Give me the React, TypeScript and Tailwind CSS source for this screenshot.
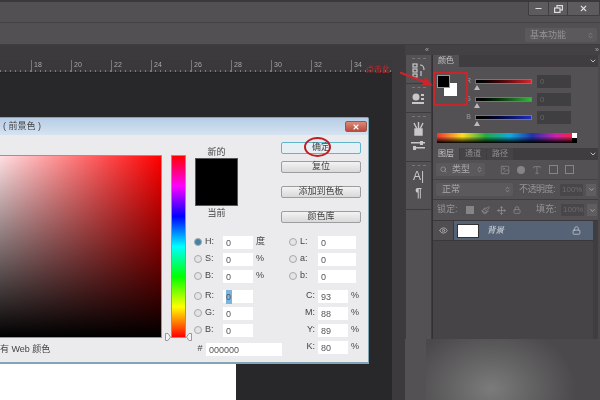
import React from 'react';
import { Minus, X, Eye, Lock, Search, Image, Type, Move, Paintbrush, ChevronsUpDown, ChevronDown } from 'lucide-react';

const font = "font-['Liberation_Sans','Noto_Sans_CJK_SC',sans-serif]";

const rulerMarks = [18, 20, 22, 24, 26, 28, 30, 32, 34];

function Ruler() {
  return (
    <div className="h-[13px] shrink-0 bg-[#3a383a] border-b border-[#232223] flex overflow-hidden bg-[repeating-linear-gradient(to_right,#7a7a7a_0,#7a7a7a_1px,transparent_1px,transparent_5px)] bg-[length:100%_2px] bg-bottom bg-no-repeat">
      <div className="w-[31px] shrink-0" />
      {rulerMarks.map((n) => (
        <div key={n} className="w-[40px] shrink-0 border-l border-[#777] pl-[2px] text-[7px] leading-[10px] text-[#a9a9a9]">
          {n}
        </div>
      ))}
    </div>
  );
}

function DialogButton({ label, active, className }: { label: string; active?: boolean; className?: string }) {
  return (
    <div
      className={`h-[12px] rounded-[2px] border flex items-center justify-center text-[9px] text-[#444] ${
        active ? 'border-[#62b4cb] bg-[#e6eff3]' : 'border-[#9d9d9f] bg-gradient-to-b from-[#f3f3f3] to-[#d9d9da]'
      } ${className ?? ''}`}
    >
      {label}
    </div>
  );
}

function Field({ label, value, unit, on, selected, width = 'w-[30px]' }: { label: string; value: string; unit?: string; on?: boolean; selected?: boolean; width?: string }) {
  return (
    <div className="flex items-center h-[14px] text-[9px] text-[#444]">
      <span className={`w-[8px] h-[8px] rounded-full border border-[#a9a9a9] mr-[3px] shrink-0 ${on ? 'bg-[#3d84a8]' : 'bg-[#e4e4e4]'}`} />
      <span className="w-[18px] shrink-0">{label}</span>
      <span className={`${width} h-[13px] bg-white pl-[3px] leading-[14px] text-[#555] shrink-0`}>
        <span className={selected ? 'inline-block w-[6px] bg-[#7cb4dc]' : ''}>{value}</span>
      </span>
      {unit && <span className="ml-[3px]">{unit}</span>}
    </div>
  );
}

function Cmyk({ label, value }: { label: string; value: string }) {
  return (
    <div className="flex items-center h-[14px] text-[9px] text-[#444]">
      <span className="w-[29px] pr-[3px] text-right shrink-0">{label}</span>
      <span className="w-[30px] h-[13px] bg-white pl-[3px] leading-[14px] text-[#555] shrink-0">{value}</span>
      <span className="ml-[3px]">%</span>
    </div>
  );
}

function HueThumb({ className }: { className: string }) {
  return (
    <svg className={`absolute bottom-[-4px] ${className}`} width="6" height="8" viewBox="0 0 6 8" fill="#f4f4f4" stroke="#999">
      <path d="M0.5 0.5h2.5l2.5 3.5-2.5 3.5h-2.5z" />
    </svg>
  );
}

function ColorDialog() {
  return (
    <div className="absolute left-[-60px] top-[117px] w-[429px] h-[247px] bg-[#ebebed] border border-[#7fa6b4] border-b-2 rounded-t-[2px] flex flex-col">
      <div className="h-[17px] shrink-0 bg-gradient-to-b from-[#b7cde5] to-[#d6e3f1] flex items-center justify-between pl-[62px] pr-[1px]">
        <span className="text-[9px] text-[#444]">( 前景色 )</span>
        <span className="w-[22px] h-[11px] rounded-[2px] bg-gradient-to-b from-[#d98a7c] to-[#bb4a3c] border border-[#99594f] flex items-center justify-center">
          <X size={8} strokeWidth={3.5} className="text-white" />
        </span>
      </div>
      <div className="flex-1 relative flex pt-[20px] pl-[59px]">
        <div className="w-[162px] h-[183px] shrink-0 border border-l-0 border-[#b5898c] bg-[linear-gradient(to_bottom,transparent,#000),linear-gradient(to_right,#ffdfe2,#f00)]" />
        <div className="relative ml-[9px] w-[15px] h-[183px] shrink-0 border border-[#b5898c] bg-[linear-gradient(to_bottom,#f00,#f0f,#00f,#0ff,#0f0,#ff0,#f00)]">
          <HueThumb className="left-[-7px]" />
          <HueThumb className="right-[-7px] rotate-180" />
        </div>
        <div className="ml-[9px] w-[43px] shrink-0 -mt-[9px] text-[9px] text-[#444] text-center">
          <div className="h-[12px] leading-[12px]">新的</div>
          <div className="h-[48px] bg-black border border-[#555]" />
          <div className="h-[14px] leading-[15px]">当前</div>
        </div>
        <div className="ml-[43px] w-[80px] shrink-0 -mt-[13px]">
          <DialogButton label="确定" active />
          <DialogButton label="复位" className="mt-[7px]" />
          <DialogButton label="添加到色板" className="mt-[13px]" />
          <DialogButton label="颜色库" className="mt-[13px]" />
        </div>
        <div className="absolute left-[253px] top-[100px] flex flex-col">
          <div className="flex flex-col gap-[3px]">
            <Field label="H:" value="0" unit="度" on />
            <Field label="S:" value="0" unit="%" />
            <Field label="B:" value="0" unit="%" />
          </div>
          <div className="flex flex-col gap-[3px] mt-[6px]">
            <Field label="R:" value="0" selected />
            <Field label="G:" value="0" />
            <Field label="B:" value="0" />
          </div>
          <div className="flex items-center h-[14px] mt-[5px] text-[9px] text-[#444]">
            <span className="w-[12px] text-center">#</span>
            <span className="w-[76px] h-[13px] bg-white pl-[3px] leading-[14px] text-[#555]">000000</span>
          </div>
        </div>
        <div className="absolute left-[348px] top-[100px] flex flex-col">
          <div className="flex flex-col gap-[3px]">
            <Field label="L:" value="0" width="w-[38px]" />
            <Field label="a:" value="0" width="w-[38px]" />
            <Field label="b:" value="0" width="w-[38px]" />
          </div>
          <div className="flex flex-col gap-[3px] mt-[6px]">
            <Cmyk label="C:" value="93" />
            <Cmyk label="M:" value="88" />
            <Cmyk label="Y:" value="89" />
            <Cmyk label="K:" value="80" />
          </div>
        </div>
        <div className="absolute left-[59px] top-[208px] text-[9px] text-[#444]">有 Web 颜色</div>
      </div>
      {/* red marker round the OK button */}
      <span className="absolute left-[363px] top-[19px] w-[27px] h-[20px] rounded-[50%] border-2 border-[#c01e24]" />
    </div>
  );
}

function PanelTab({ label, active }: { label: string; active?: boolean }) {
  return (
    <div className={`w-[26px] h-full flex items-center justify-center text-[8px] ${active ? 'bg-[#535153] text-[#c4c4c4]' : 'bg-[#454345] text-[#8f8f8f]'}`}>
      {label}
    </div>
  );
}

function ColorSlider({ label, fill }: { label: string; fill: string }) {
  return (
    <div className="flex items-center h-[13px]">
      <span className="w-[10px] text-[7px] text-[#9a9a9a] text-right">{label}</span>
      <div className="relative ml-[4px] w-[57px] h-[5px] border border-[#777]">
        <div className={`h-full ${fill}`} />
        <span className="absolute left-[-2px] top-[5px] border-x-[3px] border-x-transparent border-b-[5px] border-b-[#bbb]" />
      </div>
      <div className="ml-[5px] w-[34px] h-[13px] bg-[#3f3e40] text-[8px] leading-[13px] pl-[3px] text-[#666]">0</div>
    </div>
  );
}

function Grip() {
  return <span className="w-[14px] mt-[3px] border-t border-dashed border-[#777] shrink-0" />;
}

function DockIcons() {
  return (
    <div className="w-[27px] shrink-0 bg-[#535153] border-x border-[#3d3b3d] flex flex-col items-center text-[#c8c8c8]">
      <div className="h-[29px] w-full border-b border-[#3d3b3d] flex flex-col items-center gap-[4px]">
        <Grip />
        <svg width="14" height="15" viewBox="0 0 14 15" fill="none" stroke="currentColor" strokeWidth="1.2">
          <rect x="1" y="1" width="4" height="3" />
          <rect x="1" y="6" width="4" height="3" />
          <rect x="1" y="11" width="4" height="3" />
          <path d="M8 2c3 0 4 1 4 5M9 8v5" />
        </svg>
      </div>
      <div className="h-[29px] w-full border-b border-[#3d3b3d] flex flex-col items-center gap-[5px]">
        <Grip />
        <svg width="15" height="12" viewBox="0 0 15 12" fill="currentColor">
          <circle cx="5" cy="4" r="3.5" />
          <rect x="10" y="1" width="3" height="2" />
          <rect x="10" y="5" width="3" height="2" />
          <rect x="1" y="9" width="12" height="2" />
        </svg>
      </div>
      <div className="h-[49px] w-full border-b border-[#3d3b3d] flex flex-col items-center gap-[5px]">
        <Grip />
        <svg width="13" height="14" viewBox="0 0 13 14" fill="none" stroke="currentColor" strokeWidth="1.4">
          <path d="M2 1l3 6M6.5 0v7M11 1L8 7" />
          <path d="M3 7h7v6H3z" fill="currentColor" />
        </svg>
        <svg width="15" height="10" viewBox="0 0 15 10" fill="currentColor">
          <rect x="0" y="1" width="14" height="1.5" />
          <rect x="9" y="0" width="3" height="4" />
          <rect x="3" y="6" width="11" height="1.5" />
          <rect x="2" y="5" width="3" height="4" />
        </svg>
      </div>
      <div className="h-[48px] w-full border-b border-[#3d3b3d] flex flex-col items-center gap-[4px]">
        <Grip />
        <span className="text-[12px] leading-[13px]">A|</span>
        <span className="text-[12px] leading-[12px] font-bold">¶</span>
      </div>
    </div>
  );
}

function PercentBox() {
  return (
    <>
      <div className="ml-[3px] w-[23px] h-[12px] bg-[#484648] text-[#6d6d6d] text-[8px] leading-[12px] pl-[2px] shrink-0 overflow-hidden">100%</div>
      <div className="ml-[3px] w-[10px] h-[12px] bg-[#5f5d5f] flex items-center justify-center shrink-0">
        <ChevronDown size={7} strokeWidth={3} className="text-[#aaa]" />
      </div>
    </>
  );
}

function RightPanels() {
  return (
    <div className="w-[195px] shrink-0 flex flex-col">
      <div className="h-[10px] shrink-0 bg-[#434143] flex items-center justify-between pl-[20px] pr-[1px] text-[7px] leading-[10px] text-[#aaa]">
        <span>«</span>
        <span>»</span>
      </div>
      <div className="flex-1 flex min-h-0">
        <DockIcons />
        <div className="flex-1 min-w-0 flex flex-col bg-[#535153] border-l border-[#333133]">
          <div className="h-[12px] shrink-0 flex justify-between bg-[#3f3d3f]">
            <PanelTab label="颜色" active />
            <ChevronDown size={8} strokeWidth={3} className="mt-[2px] mr-[1px] text-[#bbb]" />
          </div>
          <div className="h-[81px] shrink-0 pl-[5px] pt-[5px] relative">
            <span className="absolute left-[11px] top-[16px] w-[13px] h-[13px] bg-white" />
            <span className="absolute left-[4px] top-[8px] w-[13px] h-[13px] bg-black border border-[#999]" />
            <div className="ml-[23px] pt-[3px] flex flex-col gap-[5px]">
              <ColorSlider label="R" fill="bg-gradient-to-r from-black to-[#d8262c]" />
              <ColorSlider label="G" fill="bg-gradient-to-r from-black to-[#36b83c]" />
              <ColorSlider label="B" fill="bg-gradient-to-r from-black to-[#1d2fc4]" />
            </div>
            <div className="absolute left-[4px] top-[66px] w-[140px] h-[10px] flex bg-[linear-gradient(to_bottom,transparent_35%,#000),linear-gradient(to_right,#e33,#fd2_18%,#2a4_35%,#1ad_52%,#23a_68%,#c2a_85%,#f22)]">
              <div className="ml-auto w-[5px] h-full bg-[linear-gradient(to_bottom,#fff_50%,#000_50%)]" />
            </div>
          </div>
          <div className="h-[12px] shrink-0 flex justify-between bg-[#3f3d3f]">
            <div className="flex gap-[1px] h-full">
              <PanelTab label="图层" active />
              <PanelTab label="通道" />
              <PanelTab label="路径" />
            </div>
            <ChevronDown size={8} strokeWidth={3} className="mt-[2px] mr-[1px] text-[#bbb]" />
          </div>
          <div className="h-[20px] shrink-0 flex items-center pl-[3px] border-b border-[#454345] text-[#858585]">
            <div className="w-[49px] h-[13px] bg-[#5b595b] rounded-[2px] flex items-center gap-[5px] pl-[4px] pr-[2px] text-[9px] text-[#aaa]">
              <Search size={7} />
              <span>类型</span>
              <ChevronsUpDown size={7} className="ml-auto" />
            </div>
            <div className="ml-[15px] flex gap-[7px] items-center">
              <Image size={10} />
              <span className="w-[8px] h-[8px] rounded-full bg-[#858585]" />
              <Type size={10} />
              <span className="w-[9px] h-[9px] border border-[#858585]" />
              <span className="w-[9px] h-[9px] border border-[#858585]" />
            </div>
          </div>
          <div className="h-[20px] shrink-0 flex items-center pl-[3px] border-b border-[#3f3d3f] text-[9px] text-[#949494]">
            <div className="w-[77px] h-[13px] bg-[#5b595b] rounded-[2px] flex items-center justify-between pl-[6px] pr-[2px] text-[#a9a9a9]">
              <span>正常</span>
              <ChevronsUpDown size={7} />
            </div>
            <span className="ml-[6px] w-[38px] whitespace-nowrap tracking-[-0.5px]">不透明度:</span>
            <PercentBox />
          </div>
          <div className="h-[21px] shrink-0 flex items-center pl-[4px] border-b border-[#3a383a] text-[9px] text-[#949494]">
            <span className="w-[24px] shrink-0">锁定:</span>
            <div className="ml-[5px] flex items-center gap-[7px] w-[56px] shrink-0">
              <span className="w-[8px] h-[8px] bg-[#858585]" />
              <Paintbrush size={9} />
              <Move size={9} />
              <Lock size={8} />
            </div>
            <span className="ml-[14px] w-[22px] shrink-0">填充:</span>
            <PercentBox />
          </div>
          <div className="flex-1 flex min-h-0">
            <div className="flex-1 min-w-0 flex flex-col">
              <div className="h-[20px] shrink-0 bg-[#566276] flex items-center border-b border-[#3a383a] pr-[12px]">
                <div className="w-[21px] h-full flex items-center justify-center bg-[#504e50] border-r border-[#3a383a]">
                  <Eye size={9} className="text-[#bbb]" />
                </div>
                <div className="ml-[3px] w-[22px] h-[14px] bg-white border border-[#333]" />
                <span className="ml-[8px] text-[8.5px] italic text-[#d5d9df]">背景</span>
                <Lock size={9} className="ml-auto text-[#c5cad2]" />
              </div>
              <div className="flex-1 bg-[#464446]" />
            </div>
            <div className="w-[5px] shrink-0 bg-[#3f3d3f]" />
          </div>
        </div>
        <div className="w-[2px] shrink-0 bg-[#4b494b]" />
      </div>
      <div className="h-[61px] shrink-0 flex">
        <div className="w-[21px] bg-[#535153]" />
        <div className="flex-1 bg-[radial-gradient(ellipse_85px_65px_at_65px_50px,#7b7b7b,#4b494b)]" />
      </div>
    </div>
  );
}

export default function App() {
  return (
    <div className={`relative w-[600px] h-[400px] overflow-hidden flex flex-col bg-[#282729] blur-[0.5px] ${font}`}>
      <div className="h-[2px] shrink-0 bg-[#3b393b]" />
      <div className="h-[21px] shrink-0 bg-[#525052] border-b border-[#444244] flex justify-end">
        <div className="flex h-[14px] bg-[#5d5b5d] text-[#ddd] border-x border-b border-[#3f3d3f] rounded-b-[2px]">
          <div className="w-[20px] flex items-center justify-center border-r border-[#3f3d3f]"><Minus size={9} strokeWidth={3} /></div>
          <div className="w-[19px] flex items-center justify-center border-r border-[#3f3d3f]">
            <svg width="9" height="8" viewBox="0 0 9 8" fill="none" stroke="currentColor" strokeWidth="1.2">
              <rect x="3" y="0.6" width="5.4" height="4.4" />
              <rect x="0.6" y="3" width="5.4" height="4.4" fill="#5d5b5d" />
            </svg>
          </div>
          <div className="w-[31px] flex items-center justify-center"><X size={9} strokeWidth={3} /></div>
        </div>
      </div>
      <div className="h-[22px] shrink-0 bg-[#525052] border-b border-[#3f3d3f] flex items-center justify-end pr-[3px] pt-[3px]">
        <div className="w-[72px] h-[14px] rounded-[2px] bg-[#5b595b] text-[9px] leading-[14px] pl-[5px] pr-[3px] text-[#949494] flex items-center justify-between">
          <span>基本功能</span>
          <ChevronsUpDown size={7} />
        </div>
      </div>
      <div className="flex-1 flex min-h-0">
        <div className="flex-1 min-w-0 flex flex-col">
          <div className="h-[15px] shrink-0 bg-[#3c3a3c]" />
          <Ruler />
          <div className="flex-1 bg-[#282729] flex flex-col justify-end">
            <div className="w-[236px] h-[36px] bg-white" />
          </div>
        </div>
        <div className="w-[13px] shrink-0 bg-[#3c3a3c]" />
        <RightPanels />
      </div>
      <ColorDialog />
      {/* annotation over the colour panel */}
      <span className="absolute left-[366px] top-[65px] text-[8px] leading-[9px] text-[#c0282c]">点击此</span>
      <svg className="absolute left-[398px] top-[68px]" width="36" height="20" viewBox="0 0 36 20" fill="none">
        <path d="M2 4.5l26 10" stroke="#d0232a" strokeWidth="2" />
        <path d="M35 17.5l-11-0.5 3-8z" fill="#d0232a" />
      </svg>
      <span className="absolute left-[433px] top-[72px] w-[35px] h-[34px] border-2 border-[#c9252b]" />
    </div>
  );
}
